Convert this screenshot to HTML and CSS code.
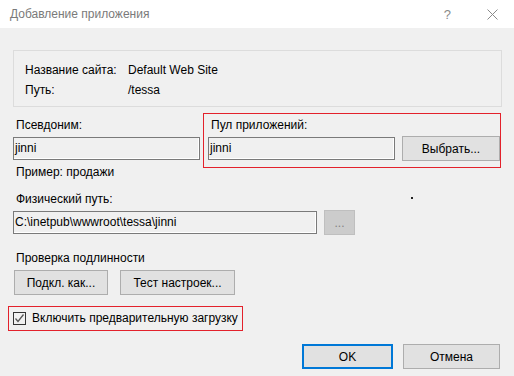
FILE: index.html
```html
<!DOCTYPE html>
<html lang="ru">

<head>
    <meta charset="UTF-8" />
    <title>Добавление приложения</title>
    <link rel="stylesheet" href="styles.css">
</head>

<body>
    <div class="titlebar">
        <span class="title">Добавление приложения</span>
        <span class="help">?</span>
        <svg class="close" width="11" height="11" viewBox="0 0 11 11">
            <path d="M0.5 0.5 L10.5 10.5 M10.5 0.5 L0.5 10.5" stroke="#8a8a8a" stroke-width="1" fill="none" />
        </svg>
    </div>

    <div class="content">
        <div class="site-box">
            <div class="site-row"><span class="site-key">Название сайта:</span><span>Default Web Site</span></div>
            <div class="site-row"><span class="site-key">Путь:</span><span>/tessa</span></div>
        </div>

        <div class="alias-row">
            <div class="alias">
                <div class="label">Псевдоним:</div>
                <div class="line">
                    <div class="field alias-field">jinni</div>
                </div>
                <div class="hint">Пример: продажи</div>
            </div>
            <div class="pool marked">
                <div class="label">Пул приложений:</div>
                <div class="line">
                    <div class="field pool-field">jinni</div>
                    <button class="btn pick-btn">Выбрать...</button>
                </div>
            </div>
        </div>

        <div class="path-label">
            <span class="label">Физический путь:</span>
            <span class="dot"></span>
        </div>
        <div class="line">
            <div class="field path-field">C:\inetpub\wwwroot\tessa\jinni</div>
            <button class="btn browse-btn" disabled>...</button>
        </div>

        <div class="label auth-label">Проверка подлинности</div>
        <div class="auth-buttons">
            <button class="btn connect-btn">Подкл. как...</button>
            <button class="btn test-btn">Тест настроек...</button>
        </div>

        <div class="preload marked">
            <span class="checkbox">
                <svg width="11" height="11" viewBox="0 0 11 11">
                    <path d="M1.5 5.5 L4 8.5 L9.5 1.5" stroke="#555" stroke-width="1.3" fill="none" />
                </svg>
            </span>
            <span class="preload-text">Включить предварительную загрузку</span>
        </div>

        <div class="footer">
            <button class="btn ok-btn">OK</button>
            <button class="btn cancel-btn">Отмена</button>
        </div>
    </div>
</body>

</html>
```

FILE: styles.css
```css
* {
    box-sizing: border-box;
    margin: 0;
    padding: 0;
}

body {
    width: 514px;
    height: 376px;
    overflow: hidden;
    background: #f0f0f0;
    font-family: "Liberation Sans", Arial, sans-serif;
    font-size: 12px;
    line-height: 15px;
    color: #000;
}

.titlebar {
    height: 28px;
    background: #fff;
    display: flex;
    align-items: center;
    padding-left: 10px;
    color: #7a7a7a;
}

.title {
    flex: 1;
}

.help {
    font-size: 13px;
    margin-right: 36px;
    color: #8a8a8a;
}

.close {
    margin-right: 16px;
}

.content {
    padding: 22px 14px 0 13px;
}

.site-box {
    width: 489px;
    height: 57px;
    border: 1px solid #dcdcdc;
    padding: 9px 0 0 11px;
}

.site-row {
    display: flex;
    line-height: 20px;
}

.site-key {
    width: 103px;
}

.alias-row {
    display: flex;
    align-items: flex-start;
    margin-top: 6px;
}

.alias {
    width: 187px;
    padding-top: 5px;
}

.label {
    padding-left: 3px;
}

.line {
    display: flex;
    align-items: center;
    height: 25px;
    margin-top: 3px;
}

.field {
    height: 23px;
    line-height: 21px;
    border: 1px solid #7a7a7a;
    box-shadow: inset -1px -1px 0 #fff;
    padding-left: 1px;
    white-space: nowrap;
    overflow: hidden;
}

.alias-field,
.pool-field {
    width: 187px;
}

.hint {
    margin-top: 4px;
    padding-left: 3px;
}

.marked {
    border: 1px solid #e3212b;
}

.pool {
    width: 301px;
    height: 55px;
    margin-left: 3px;
    padding: 4px 0 0 4px;
}

.btn {
    font-family: inherit;
    font-size: 12px;
    color: #000;
    height: 25px;
    background: #e1e1e1;
    border: 1px solid #adadad;
}

.pick-btn {
    width: 98px;
    margin-left: 7px;
}

.path-label {
    display: flex;
    align-items: center;
    margin-top: 12px;
}

.dot {
    width: 2px;
    height: 2px;
    background: #222;
    margin-left: 298px;
    margin-top: -4px;
}

.path-field {
    width: 304px;
}

.browse-btn {
    width: 31px;
    margin-left: 7px;
    background: #cccccc;
    border-color: #bfbfbf;
    color: #838383;
}

.auth-label {
    margin-top: 16px;
}

.auth-buttons {
    display: flex;
    gap: 12px;
    margin-top: 4px;
    padding-left: 1px;
}

.connect-btn {
    width: 94px;
}

.test-btn {
    width: 115px;
}

.preload {
    display: flex;
    align-items: center;
    width: 235px;
    height: 25px;
    margin: 11px 0 0 -5px;
    padding-left: 4px;
}

.checkbox {
    width: 13px;
    height: 13px;
    border: 1px solid #333;
    display: flex;
    align-items: center;
    justify-content: center;
}

.preload-text {
    margin-left: 6px;
}

.footer {
    display: flex;
    justify-content: flex-end;
    gap: 10px;
    margin-top: 13px;
}

.ok-btn {
    width: 91px;
    border: 2px solid #0078d7;
}

.cancel-btn {
    width: 97px;
}
```
